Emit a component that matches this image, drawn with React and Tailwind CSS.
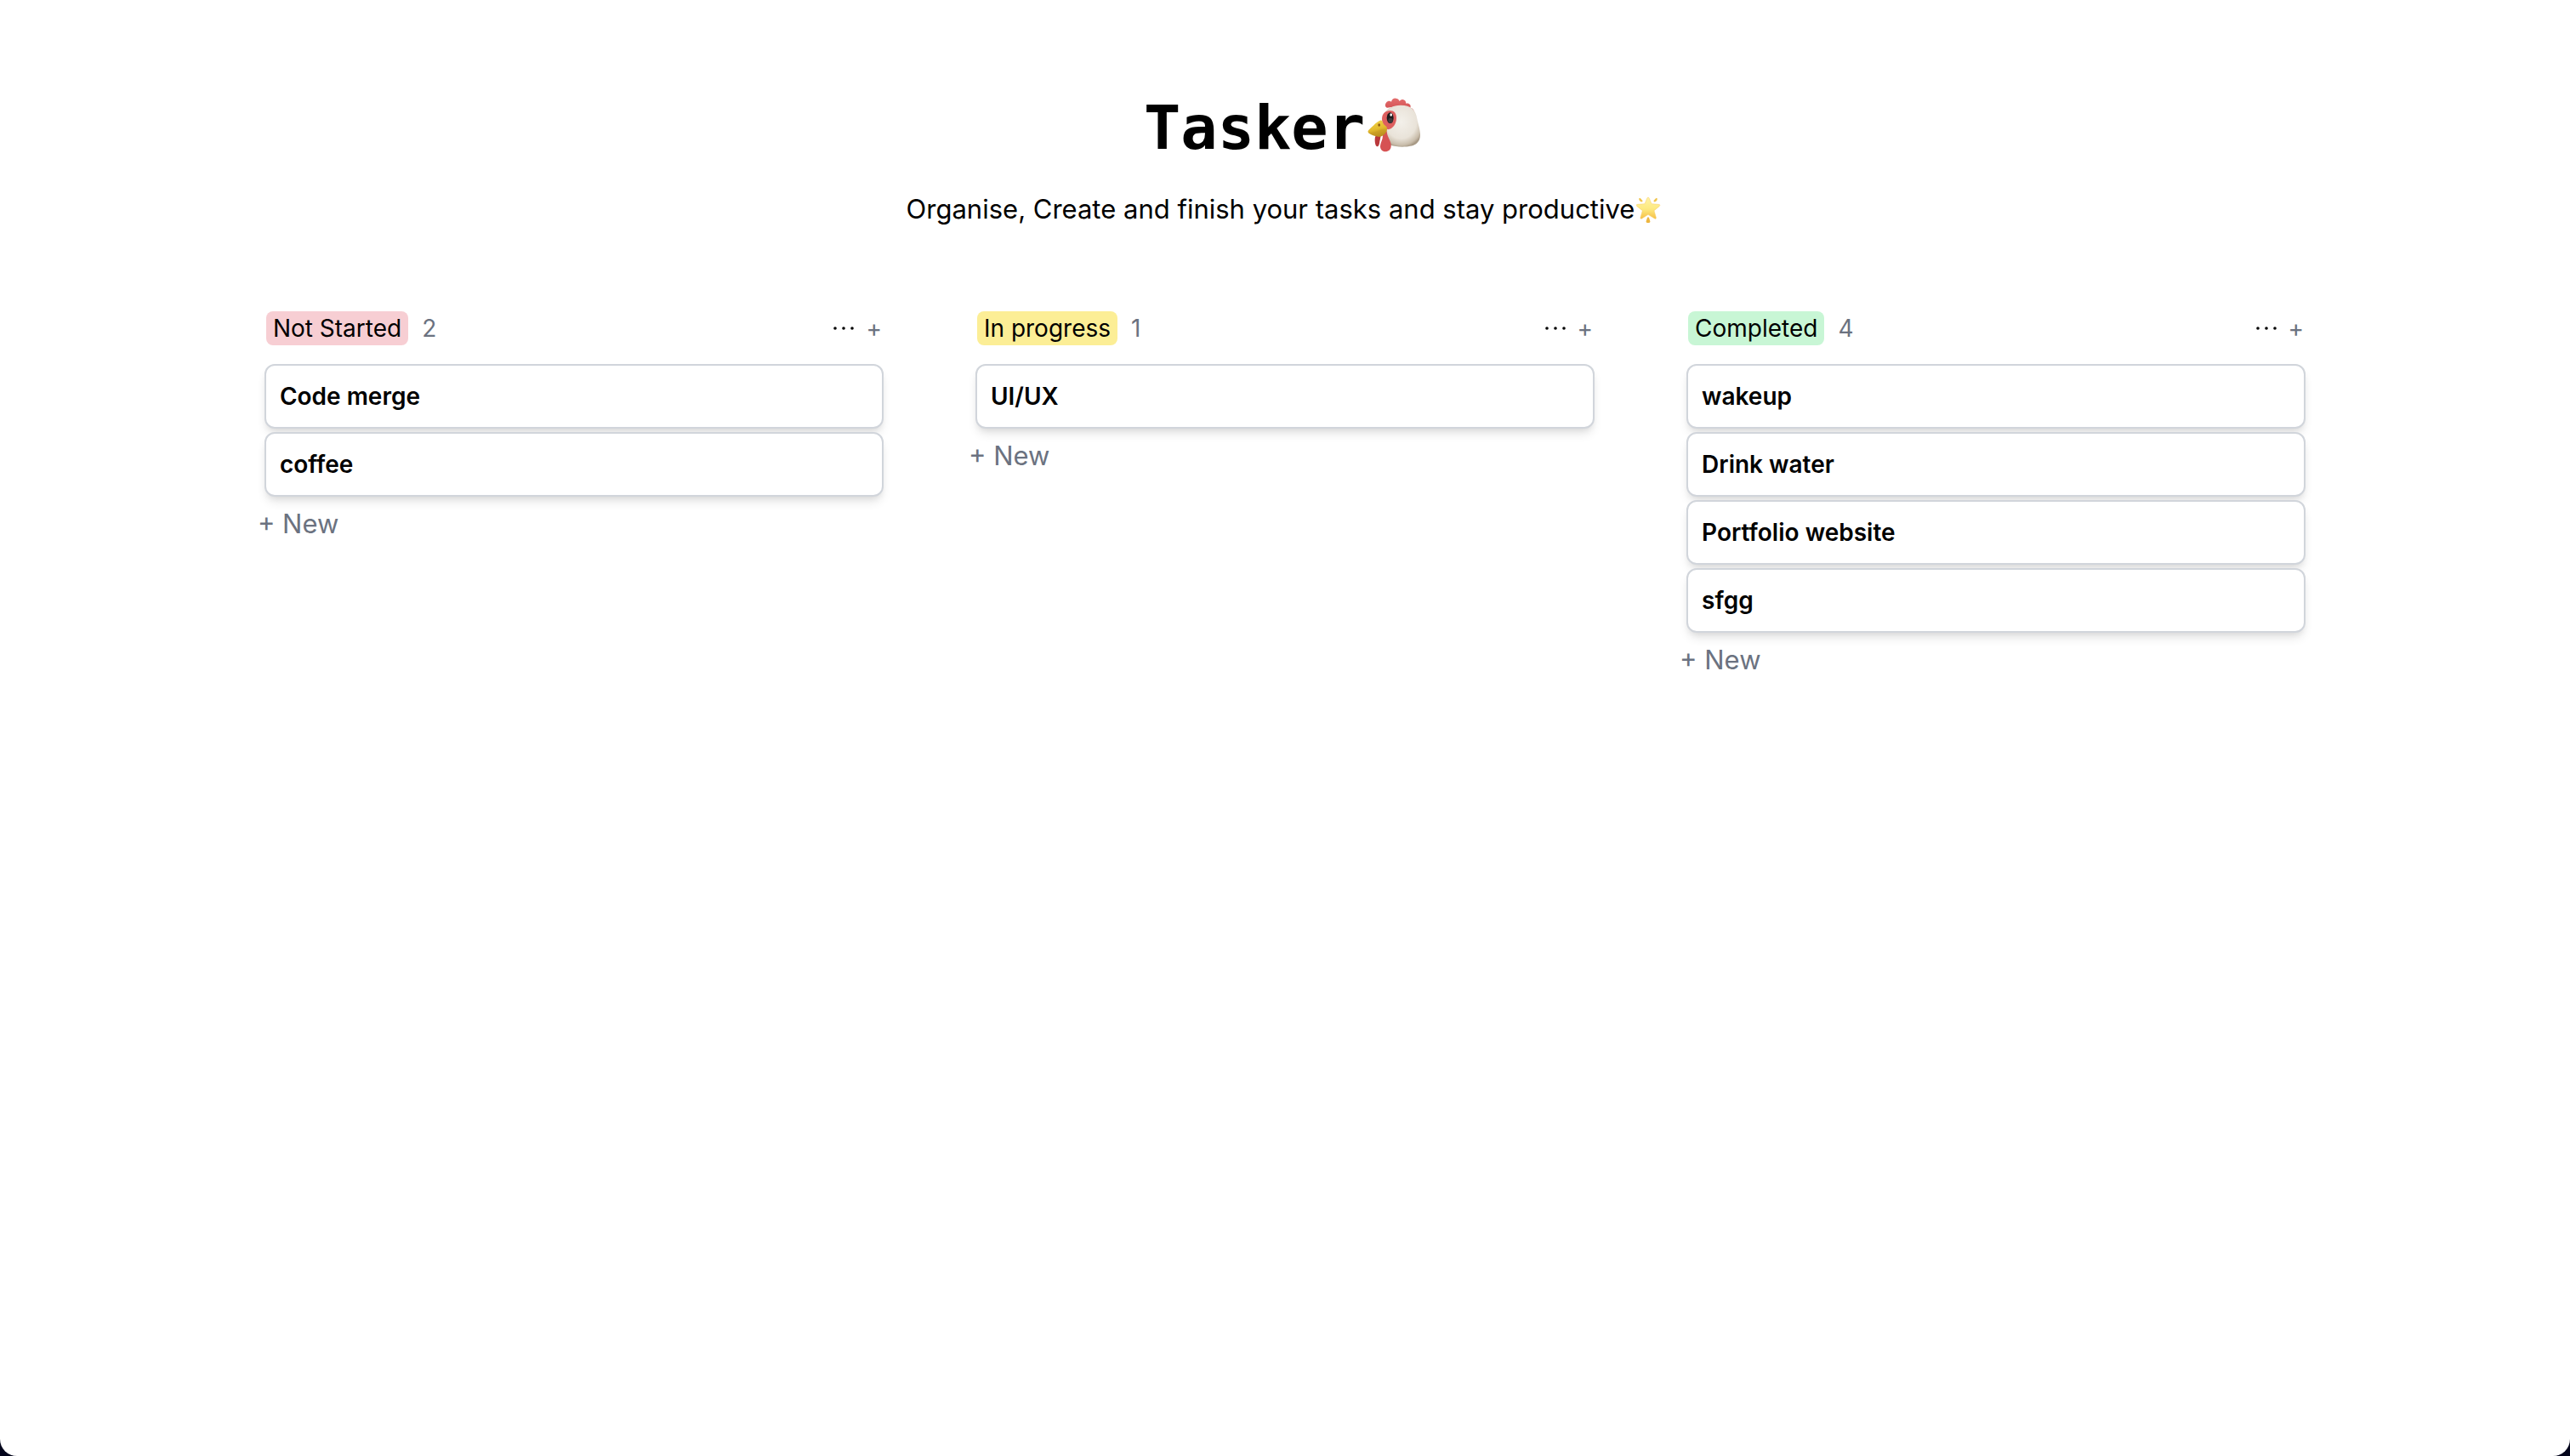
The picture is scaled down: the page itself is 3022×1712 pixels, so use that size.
import React from "react";

const columns = [
  { name: "Not Started", tone: "bg-[#f7ced3]", tasks: ["Code merge", "coffee"] },
  { name: "In progress", tone: "bg-[#fcee96]", tasks: ["UI/UX"] },
  {
    name: "Completed",
    tone: "bg-[#c8f6d5]",
    tasks: ["wakeup", "Drink water", "Portfolio website", "sfgg"],
  },
];

function Chicken() {
  return (
    <svg viewBox="12 30 216 216" className="-mt-2 size-[72px]" role="img" aria-label="Chicken">
      <defs>
        <radialGradient id="head" cx="0.5" cy="0.4" r="0.62">
          <stop offset="0" stopColor="#f3f0ea" />
          <stop offset="0.65" stopColor="#e9e3d9" />
          <stop offset="0.9" stopColor="#c9bdab" />
          <stop offset="1" stopColor="#a89a86" />
        </radialGradient>
        <linearGradient id="beak" x1="0" y1="0" x2="0.3" y2="1">
          <stop offset="0" stopColor="#f3d64c" />
          <stop offset="0.6" stopColor="#e3bb2f" />
          <stop offset="1" stopColor="#b98a1c" />
        </linearGradient>
        <linearGradient id="comb" x1="0" y1="0" x2="0" y2="1">
          <stop offset="0" stopColor="#e36d6d" />
          <stop offset="1" stopColor="#cf4a4b" />
        </linearGradient>
      </defs>
      <path
        d="M90 80c-7-3-8-12-3-18 5-7 14-7 18-3 2-9 9-13 16-12 7 0 11 5 13 10 5-6 12-7 17-4 5 3 6 8 6 12 6-2 11 0 14 4 3 4 2 8 1 11 7 1 12 6 15 17l-20-2-40-20z"
        fill="url(#comb)"
      />
      <path
        d="M138 71c36 0 53 16 58 48 2 13 10 33 11 53 1 36-22 46-63 46-34 0-55-8-62-22-8-15-8-40-10-61-2-20 10-64 66-64z"
        fill="url(#head)"
      />
      <path
        d="M73 111c3-12 13-20 27-21 15 0 24 10 23 27 0 20-13 38-30 40l-10-7c-7-11-13-24-10-39z"
        fill="#dd5f5f"
      />
      <path d="M49 181c4-5 12-8 17-4 3 3 0 12-2 22-1 10-3 18-9 18-8-1-10-27-6-36z" fill="#b9383b" />
      <path d="M80 150c9 4 9 17 12 28 4 12 14 25 12 39-1 11-9 18-20 18s-18-8-18-19c0-13 9-24 9-37 0-11-1-22 5-29z" fill="#d65253" />
      <path d="M69 124c8 5 5 12 13 18 7 5 9 8 8 15-2 13-16 27-30 25-13-2-30-7-36-14-3-4-1-8 4-12 14-12 26-28 41-32z" fill="url(#beak)" />
      <path d="M24 167c13 3 27-2 38-7 9-5 17-5 26 0-4 12-16 23-28 22-13-2-30-7-36-15z" fill="#c69a24" opacity="0.45" />
      <ellipse cx="62" cy="141" rx="4" ry="5" fill="#8c5b14" />
      <ellipse cx="101" cy="116" rx="12" ry="19" fill="#1d1b1c" />
      <ellipse cx="102" cy="125" rx="8" ry="9" fill="#3b3a3c" />
      <ellipse cx="104" cy="105" rx="4" ry="5" fill="#ffffff" />
    </svg>
  );
}

function GlowingStar() {
  return (
    <svg viewBox="54 28 96 96" className="size-8" role="img" aria-label="Glowing star">
      <defs>
        <linearGradient id="star" x1="0" y1="0" x2="0" y2="1">
          <stop offset="0" stopColor="#fff3a6" />
          <stop offset="0.55" stopColor="#fde97f" />
          <stop offset="1" stopColor="#f5bf47" />
        </linearGradient>
      </defs>
      <path
        d="M96 34c2 0 3 2 4 4l8 19 25 2c5 0 6 4 2 7l-18 15 7 24c1 4-2 6-5 4L96 95l-22 14c-4 2-6-1-5-4l7-24-19-15c-4-3-3-7 2-7l25-2 8-19c1-2 2-4 4-4z"
        fill="url(#star)"
        stroke="#f6cb62"
        strokeWidth="1.5"
      />
      <path d="M64 38c1-2 3-2 5 0l7 7c2 3-2 6-5 5-5-2-8-6-7-12zM128 38c-1-2-3-2-5 0l-7 7c-2 3 2 6 5 5 5-2 8-6 7-12z" fill="#f0c44c" />
      <path d="M93 106c1-3 5-3 6 0l4 12c1 4-2 6-7 6s-8-2-7-6z" fill="#edb63f" />
    </svg>
  );
}

function DotsIcon() {
  return (
    <svg viewBox="0 0 28 28" className="size-7" fill="black" aria-hidden="true">
      <circle cx="4" cy="14" r="1.8" />
      <circle cx="14" cy="14" r="1.8" />
      <circle cx="24" cy="14" r="1.8" />
    </svg>
  );
}

function Column({ name, tone, tasks }) {
  return (
    <section className="px-[54px]">
      <header className="flex items-center justify-between px-[2px]">
        <div className="flex items-center gap-4">
          <h2 className={`${tone} rounded-lg px-2 text-[28px] leading-10`}>{name}</h2>
          <span className="text-[28px] leading-10 text-[#6b7280]">{tasks.length}</span>
        </div>
        <div className="flex items-center gap-3">
          <button type="button" aria-label={`${name} options`}>
            <DotsIcon />
          </button>
          <button
            type="button"
            aria-label={`Add task to ${name}`}
            className="text-[28px] leading-10 text-[#6b7280]"
          >
            +
          </button>
        </div>
      </header>
      <ul className="mt-[22px] flex flex-col gap-1">
        {tasks.map((task) => (
          <li
            key={task}
            className="rounded-xl border-2 border-[#d1d5db] bg-white px-4 py-4 text-[28px] leading-10 font-semibold shadow-[0_8px_12px_-2px_rgba(0,0,0,0.1),0_4px_8px_-4px_rgba(0,0,0,0.1)]"
          >
            {task}
          </li>
        ))}
      </ul>
      <button type="button" className="-ml-2 mt-2 text-[31px] leading-12 text-[#6b7280]">
        + New
      </button>
    </section>
  );
}

export default function App() {
  return (
    <div className="min-h-screen bg-[#04061c] font-['Inter',sans-serif] text-black">
      <main className="min-h-screen rounded-b-[20px] bg-white pt-[110px]">
        <h1 className="flex items-center justify-center font-['DejaVu_Sans_Mono',monospace] text-[72px] leading-20 font-bold">
          Tasker
          <Chicken />
        </h1>
        <p className="mt-8 flex items-center justify-center gap-[2px] text-[31px] leading-12">
          Organise, Create and finish your tasks and stay productive
          <GlowingStar />
        </p>
        <div className="mx-auto mt-24 grid w-[83%] grid-cols-3">
          {columns.map((column) => (
            <Column key={column.name} {...column} />
          ))}
        </div>
      </main>
    </div>
  );
}
